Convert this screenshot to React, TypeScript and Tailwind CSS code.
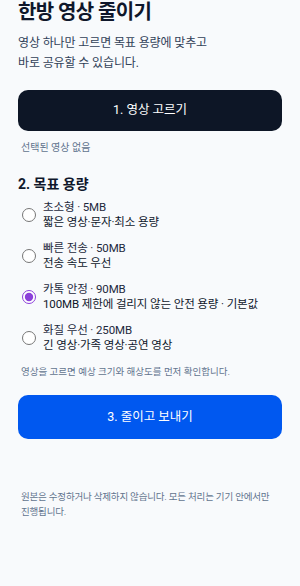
import React, { useState } from 'react';

const options = [
  { id: 'tiny', title: '초소형 · 5MB', desc: '짧은 영상·문자·최소 용량' },
  { id: 'fast', title: '빠른 전송 · 50MB', desc: '전송 속도 우선' },
  { id: 'kakao', title: '카톡 안정 · 90MB', desc: '100MB 제한에 걸리지 않는 안전 용량 · 기본값' },
  { id: 'quality', title: '화질 우선 · 250MB', desc: '긴 영상·가족 영상·공연 영상' },
];

export default function App() {
  const [target, setTarget] = useState('kakao');

  return (
    <div className="min-h-screen bg-[#f8fafc] px-[18px] font-['Roboto','Noto_Sans_CJK_KR',sans-serif] text-slate-900">
      <h1 className="text-[20px] leading-[24px] font-bold tracking-[-0.03em]">한방 영상 줄이기</h1>
      <p className="mt-[9px] text-[12px] leading-[20px] text-slate-700 tracking-[-0.01em]">
        영상 하나만 고르면 목표 용량에 맞추고
        <br />
        바로 공유할 수 있습니다.
      </p>

      <button className="mt-[17px] w-full h-[41px] rounded-[10px] bg-[#0d1626] text-white text-[12.5px]">
        1. 영상 고르기
      </button>
      <p className="mt-[9px] px-[3px] text-[10px] leading-[16px] text-slate-500">선택된 영상 없음</p>

      <h2 className="mt-[18px] text-[14px] leading-[20px] font-bold">2. 목표 용량</h2>
      <div className="mt-[6px] flex flex-col gap-[11px]">
        {options.map(o => (
          <label key={o.id} className="flex items-center gap-[7px] pl-[4px] h-[30px] cursor-pointer">
            <input
              type="radio"
              name="target"
              checked={target === o.id}
              onChange={() => setTarget(o.id)}
              className="m-0 w-[14px] h-[14px] shrink-0 accent-[#8b3fd9]"
            />
            <span className="text-[11.5px] leading-[15px] text-slate-800 tracking-[-0.01em]">
              <span className="block">{o.title}</span>
              <span className="block text-slate-900">{o.desc}</span>
            </span>
          </label>
        ))}
      </div>
      <p className="mt-[12px] px-[3px] text-[9.5px] leading-[14px] text-slate-500">
        영상을 고르면 예상 크기와 해상도를 먼저 확인합니다.
      </p>

      <button className="mt-[16px] w-full h-[44px] rounded-[10px] bg-[#0058f0] text-white text-[12.5px]">
        3. 줄이고 보내기
      </button>

      <p className="mt-[50px] px-[3px] text-[9.5px] leading-[15px] text-slate-500 tracking-[-0.02em]">
        원본은 수정하거나 삭제하지 않습니다. 모든 처리는 기기 안에서만 진행됩니다.
      </p>
    </div>
  );
}
